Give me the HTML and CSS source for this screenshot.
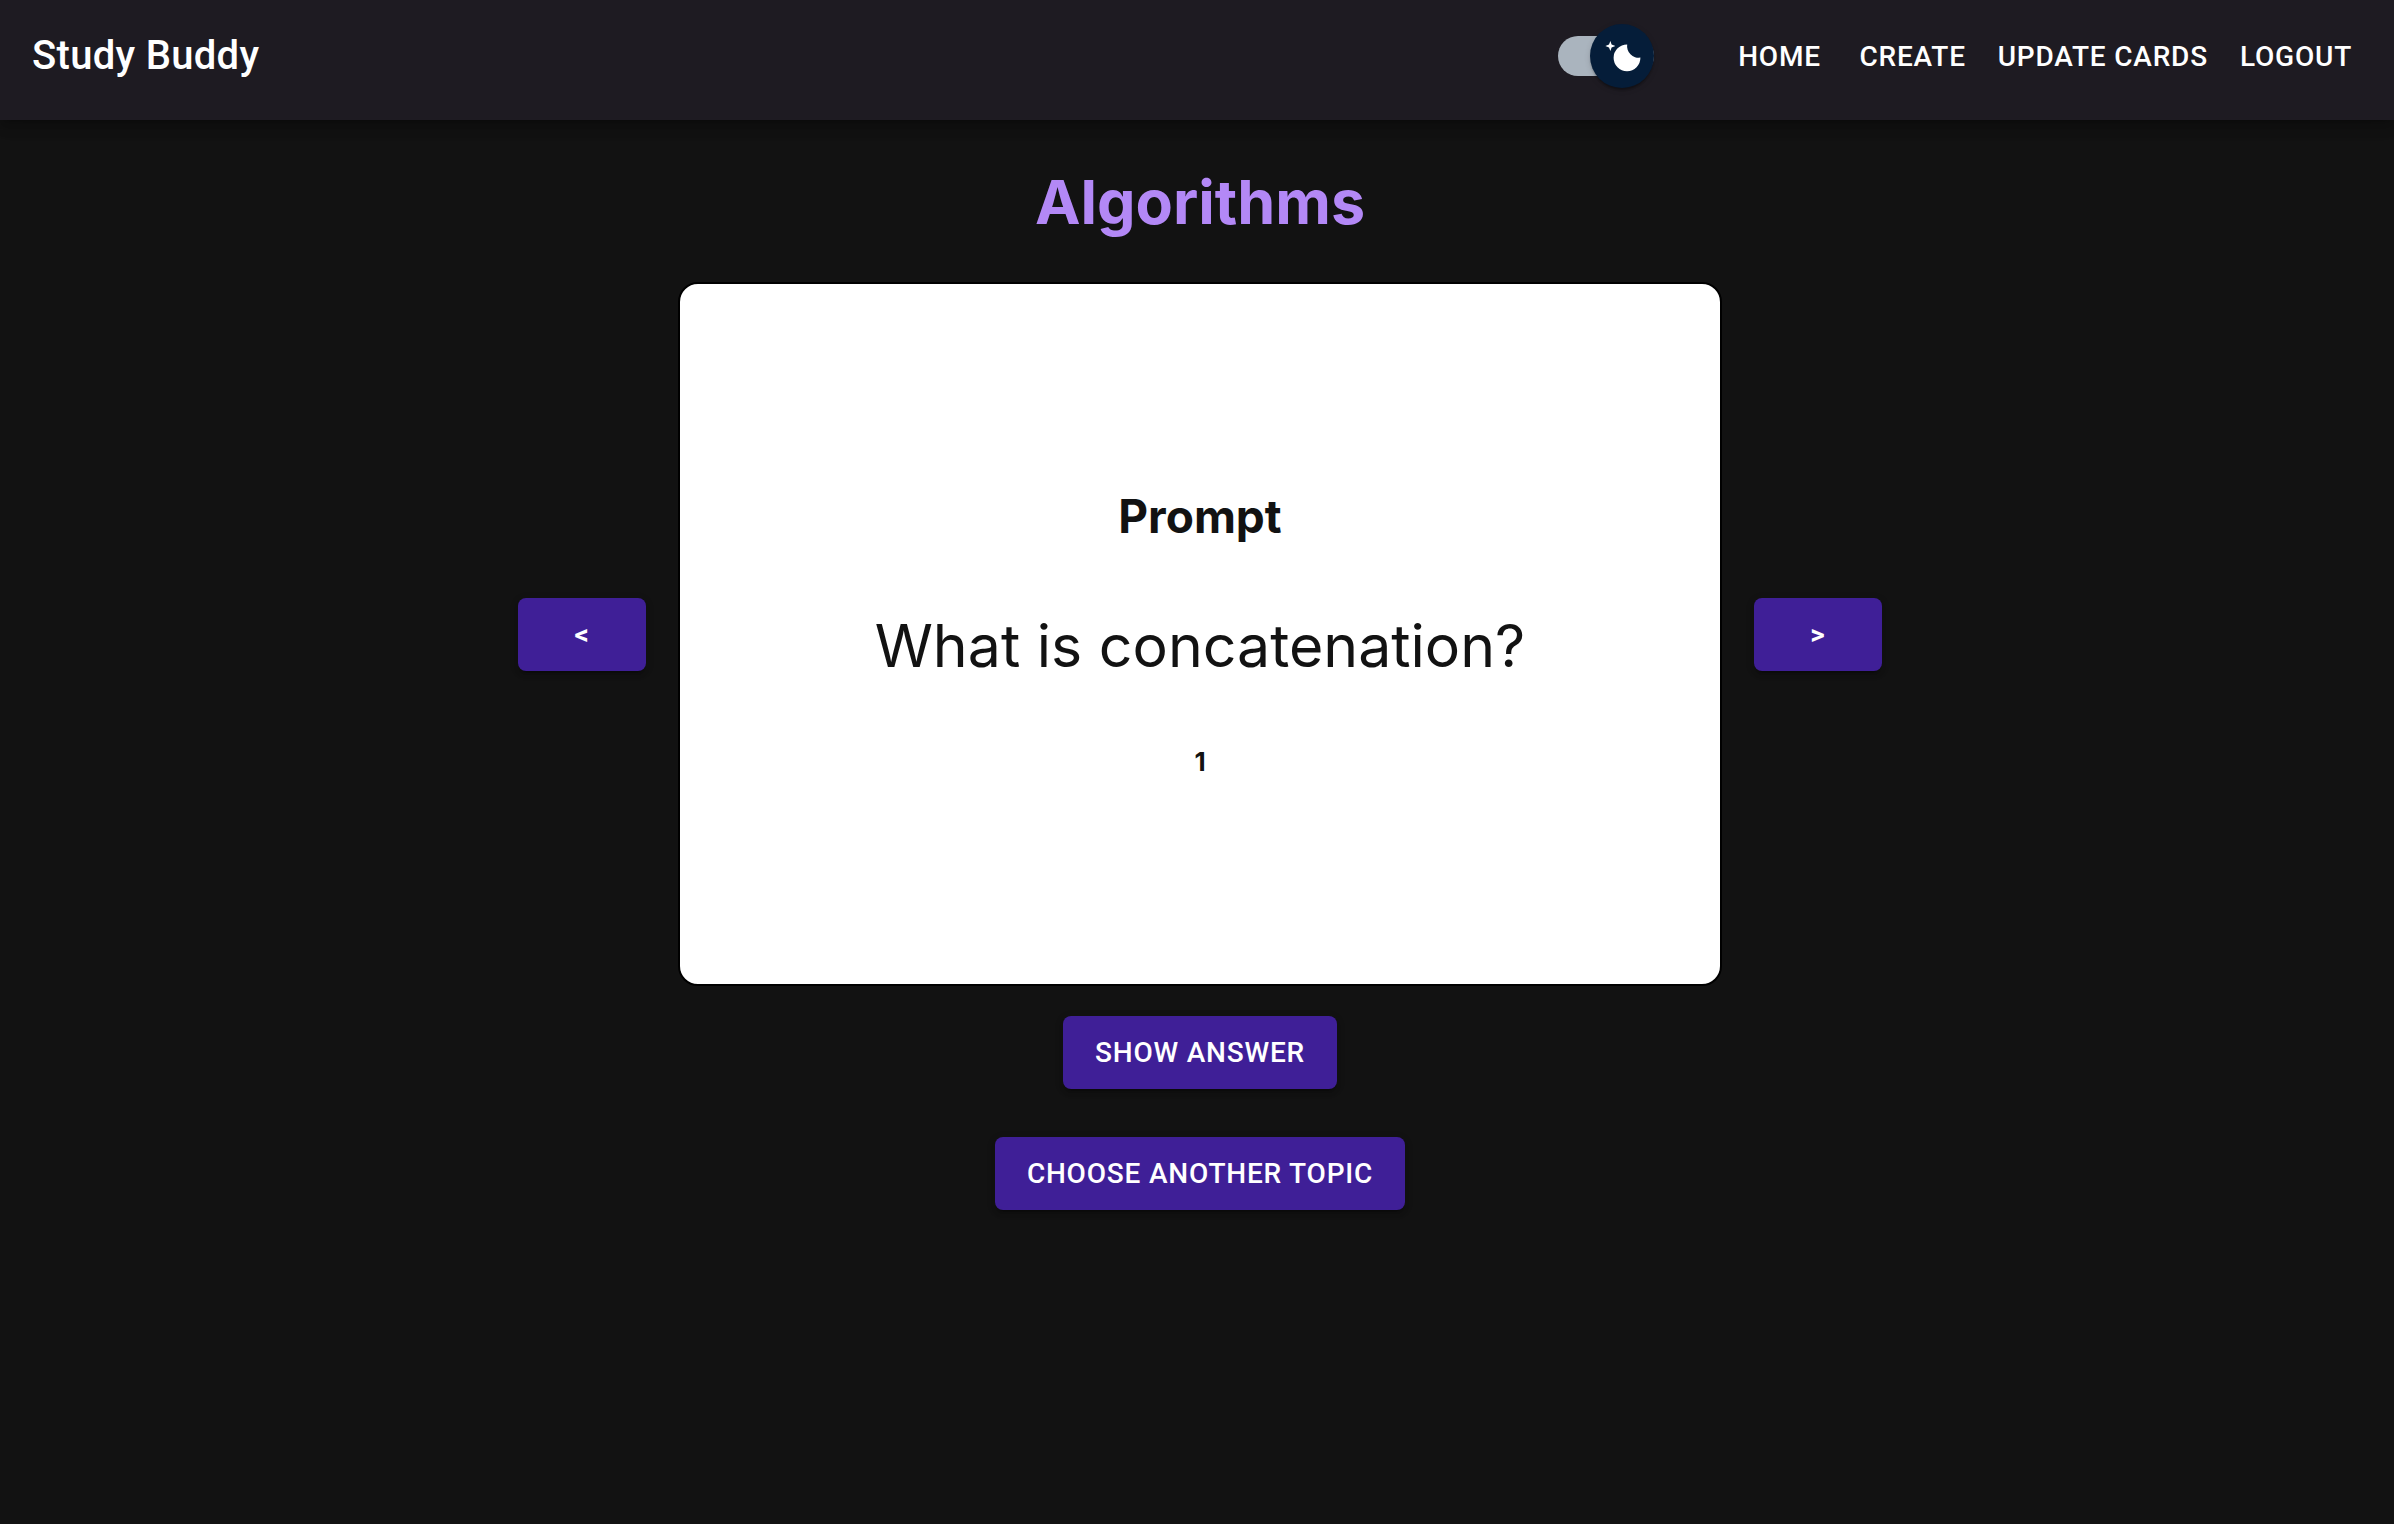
FILE: index.html
```html
<!DOCTYPE html>
<html lang="en">
<head>
  <meta charset="utf-8">
  <meta name="viewport" content="width=device-width, initial-scale=1">
  <title>Study Buddy</title>
  <link rel="stylesheet" href="styles.css">
</head>
<body>
  <header class="app-bar">
    <div class="brand">Study Buddy</div>
    <label class="switch">
      <input class="switch-input" type="checkbox" role="switch" aria-label="Dark mode" checked>
      <span class="switch-thumb">
        <svg class="switch-icon" viewBox="0 0 20 20" aria-hidden="true">
          <path fill="#fff" d="M4.2 2.5l-.7 1.8-1.8.7 1.8.7.7 1.8.6-1.8L6.7 5l-1.9-.7-.6-1.8zm15 8.3a6.7 6.7 0 11-6.6-6.6 5.8 5.8 0 006.6 6.6z"/>
        </svg>
      </span>
    </label>
    <nav class="nav">
      <a class="nav-link" href="#home">HOME</a>
      <a class="nav-link" href="#create">CREATE</a>
      <a class="nav-link" href="#update">UPDATE CARDS</a>
      <a class="nav-link" href="#logout">LOGOUT</a>
    </nav>
  </header>
  <main class="study">
    <h1 class="topic">Algorithms</h1>
    <div class="deck">
      <button class="button button-arrow" type="button" aria-label="Previous card">&lt;</button>
      <section class="card">
        <h2 class="card-label">Prompt</h2>
        <p class="card-text">What is concatenation?</p>
        <p class="card-number">1</p>
      </section>
      <button class="button button-arrow" type="button" aria-label="Next card">&gt;</button>
    </div>
    <div class="actions">
      <button class="button" type="button">SHOW ANSWER</button>
      <button class="button" type="button">CHOOSE ANOTHER TOPIC</button>
    </div>
  </main>
</body>
</html>
```
FILE: styles.css
```css
* {
  box-sizing: border-box;
}

body {
  margin: 0;
  min-height: 100vh;
  background: #121212;
  color: #fff;
  font-family: Inter, "Liberation Sans", sans-serif;
}

.app-bar {
  display: flex;
  align-items: center;
  height: 120px;
  padding: 0 26px 8px 32px;
  background: #1e1b22;
  box-shadow:
    0 4px 8px -2px rgba(0, 0, 0, 0.2),
    0 8px 10px rgba(0, 0, 0, 0.14),
    0 2px 20px rgba(0, 0, 0, 0.12);
}

.brand {
  margin-right: auto;
  font: 500 40px/64px Roboto, sans-serif;
  letter-spacing: 0.0075em;
}

.switch {
  position: relative;
  display: flex;
  width: 124px;
  height: 68px;
  padding: 14px;
  margin-right: 48px;
}

.switch-input {
  appearance: none;
  flex: 1;
  margin: 0;
  border-radius: 20px;
  background: #aab4be;
}

/* The thumb lies over the track and overhangs it. */
.switch-thumb {
  position: absolute;
  top: 2px;
  left: 2px;
  display: grid;
  place-items: center;
  width: 64px;
  height: 64px;
  border-radius: 50%;
  background: #051d39;
  box-shadow:
    0 4px 2px -2px rgba(0, 0, 0, 0.2),
    0 2px 2px rgba(0, 0, 0, 0.14),
    0 2px 6px rgba(0, 0, 0, 0.12);
}

.switch-input:checked + .switch-thumb {
  left: 46px;
}

.switch-icon {
  width: 40px;
  height: 40px;
}

.nav {
  display: flex;
}

.nav-link {
  min-width: 128px;
  padding: 12px 16px;
  color: #fff;
  font: 500 28px/49px Roboto, sans-serif;
  letter-spacing: 0.02857em;
  text-align: center;
  text-decoration: none;
}

.study {
  display: flex;
  flex-direction: column;
  align-items: center;
  padding: 40px 0 64px 6px;
}

.topic {
  margin: 0 0 38px;
  color: #b388f6;
  font-size: 61px;
  font-weight: 700;
  line-height: 84px;
}

.deck {
  display: flex;
  align-items: center;
  justify-content: center;
  gap: 32px;
  width: 100%;
}

.card {
  display: flex;
  flex-direction: column;
  align-items: center;
  justify-content: center;
  width: 1044px;
  min-height: 704px;
  padding-bottom: 4px;
  border: 2px solid #000;
  border-radius: 20px;
  background: #fff;
  color: #121212;
}

.card-label {
  margin: 0 0 56px;
  font-size: 46px;
  font-weight: 700;
  line-height: 64px;
}

.card-text {
  margin: 0 0 56px;
  font-size: 59px;
  line-height: 84px;
}

.card-number {
  margin: 0;
  font-size: 26px;
  font-weight: 700;
  line-height: 36px;
}

.actions {
  display: flex;
  flex-direction: column;
  align-items: center;
  gap: 48px;
  padding-top: 30px;
}

.button {
  min-width: 128px;
  padding: 12px 32px;
  border: 0;
  border-radius: 8px;
  background: #3f1f97;
  color: #fff;
  font: 500 28px/49px Roboto, sans-serif;
  letter-spacing: 0.02857em;
  box-shadow:
    0 6px 2px -4px rgba(0, 0, 0, 0.2),
    0 4px 4px rgba(0, 0, 0, 0.14),
    0 2px 10px rgba(0, 0, 0, 0.12);
}

.button-arrow {
  font-weight: 700;
}
```
